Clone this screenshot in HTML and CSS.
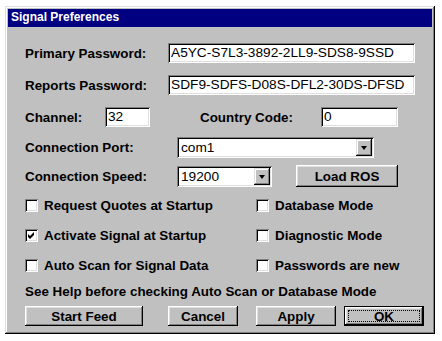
FILE: index.html
```html
<!DOCTYPE html>
<html>
<head>
<meta charset="utf-8">
<link rel="stylesheet" href="styles.css">
</head>
<body>
<div class="window">
  <div class="titlebar">Signal Preferences</div>
  <div class="content">
    <div class="row r1">
      <span class="label w-pass">Primary Password:</span>
      <div class="field f-pass">A5YC-S7L3-3892-2LL9-SDS8-9SSD</div>
    </div>
    <div class="row r2">
      <span class="label w-pass">Reports Password:</span>
      <div class="field f-pass">SDF9-SDFS-D08S-DFL2-30DS-DFSD</div>
    </div>
    <div class="row r3">
      <span class="label w-chan">Channel:</span>
      <div class="field f-chan">32</div>
      <span class="label w-country">Country Code:</span>
      <div class="field f-country">0</div>
    </div>
    <div class="row r4">
      <span class="label w-conn">Connection Port:</span>
      <div class="combo c-port"><span class="combo-text">com1</span><span class="drop"><span class="arrow"></span></span></div>
    </div>
    <div class="row r5">
      <span class="label w-conn">Connection Speed:</span>
      <div class="combo c-speed"><span class="combo-text">19200</span><span class="drop"><span class="arrow"></span></span></div>
      <div class="btn b-load">Load ROS</div>
    </div>
    <div class="checks">
      <div class="check"><span class="box"></span><span class="label">Request Quotes at Startup</span></div>
      <div class="check"><span class="box"></span><span class="label">Database Mode</span></div>
      <div class="check"><span class="box"><svg width="13" height="13" viewBox="0 0 13 13"><polygon points="3,5 5,7 9,3 9,6 5,10 3,8" fill="#000"/></svg></span><span class="label">Activate Signal at Startup</span></div>
      <div class="check"><span class="box"></span><span class="label">Diagnostic Mode</span></div>
      <div class="check"><span class="box"></span><span class="label">Auto Scan for Signal Data</span></div>
      <div class="check"><span class="box"></span><span class="label">Passwords are new</span></div>
    </div>
    <div class="help label">See Help before checking Auto Scan or Database Mode</div>
    <div class="buttons">
      <div class="btn b-start">Start Feed</div>
      <div class="btn b-cancel">Cancel</div>
      <div class="btn b-apply">Apply</div>
      <div class="btn b-ok default"><span class="focus">OK</span></div>
    </div>
  </div>
</div>
</body>
</html>
```
FILE: styles.css
```css
html, body {
  margin: 0;
  padding: 0;
  background: #ffffff;
}
body {
  font-family: "Liberation Sans", Arial, sans-serif;
  color: #000;
}
.window {
  margin: 6px 0 0 5px;
  width: 430px;
  height: 328px;
  box-sizing: border-box;
  padding: 3px;
  background: #c0c0c0;
  box-shadow: inset -1px -1px #000, inset 1px 1px #dfdfdf, inset -2px -2px #808080, inset 2px 2px #fff;
}
.titlebar {
  height: 18px;
  background: #000080;
  color: #fff;
  font-weight: bold;
  font-size: 12px;
  line-height: 17px;
  padding-left: 3px;
}
.content {
  padding-left: 17px;
}
.label {
  font-weight: bold;
  font-size: 13.4px;
  white-space: nowrap;
}
.row {
  display: flex;
  align-items: center;
  height: 20px;
}
.r1 { margin-top: 16px; }
.r2 { margin-top: 12px; }
.r3 { margin-top: 12px; }
.r4 { margin-top: 10px; height: 21px; }
.r5 { margin-top: 7px; height: 22px; }

.w-pass { width: 143px; }
.w-chan { width: 80px; }
.w-country { width: 121px; margin-left: 50px; }
.w-conn { width: 152px; }

.field, .combo {
  box-sizing: border-box;
  height: 20px;
  background: #fff;
  box-shadow: inset 1px 1px #808080, inset -1px -1px #fff, inset 2px 2px #000, inset -2px -2px #dfdfdf;
  font-size: 13.7px;
  line-height: 20px;
  padding-left: 3px;
  white-space: nowrap;
  overflow: hidden;
}
.f-pass { width: 247px; }
.f-chan { width: 45px; }
.f-country { width: 77px; }

.combo {
  height: 21px;
  display: flex;
  align-items: stretch;
  padding: 2px;
  line-height: 17px;
}
.combo-text {
  flex: 1;
  padding-left: 2px;
}
.c-port { width: 197px; }
.c-speed { width: 95px; }
.drop {
  width: 16px;
  background: #c0c0c0;
  box-shadow: inset -1px -1px #000, inset 1px 1px #dfdfdf, inset -2px -2px #808080, inset 2px 2px #fff;
  display: flex;
  align-items: center;
  justify-content: center;
}
.arrow {
  width: 0;
  height: 0;
  border-left: 3.5px solid transparent;
  border-right: 3.5px solid transparent;
  border-top: 4px solid #000;
  margin-top: 1px;
}

.btn {
  box-sizing: border-box;
  height: 20px;
  background: #c0c0c0;
  box-shadow: inset -1px -1px #000, inset 1px 1px #fff, inset -2px -2px #808080, inset 2px 2px #dfdfdf;
  font-weight: bold;
  font-size: 13.4px;
  display: flex;
  align-items: center;
  justify-content: center;
}
.b-load { width: 102px; height: 22px; margin-left: 24px; }

.checks {
  margin-top: 10px;
  display: grid;
  grid-template-columns: 231px auto;
  grid-auto-rows: 16px;
  row-gap: 14px;
}
.check {
  display: flex;
  align-items: center;
  gap: 6px;
}
.box {
  width: 13px;
  height: 13px;
  box-sizing: border-box;
  background: #fff;
  box-shadow: inset 1px 1px #808080, inset -1px -1px #fff, inset 2px 2px #000, inset -2px -2px #dfdfdf;
  display: block;
}
.box svg { display: block; }

.help {
  margin-top: 11px;
  line-height: 16px;
}

.buttons {
  margin-top: 6px;
  display: flex;
}
.b-start { width: 118px; }
.b-cancel { width: 70px; margin-left: 25px; }
.b-apply { width: 80px; margin-left: 18px; }
.b-ok { width: 80px; margin-left: 8px; }
.default {
  box-shadow: inset 0 0 0 1px #000, inset -2px -2px #000, inset 2px 2px #fff, inset -3px -3px #808080, inset 3px 3px #dfdfdf;
  padding: 4px;
}
.focus {
  flex: 1;
  align-self: stretch;
  border: 1px dotted #000;
  display: flex;
  align-items: center;
  justify-content: center;
}
```
